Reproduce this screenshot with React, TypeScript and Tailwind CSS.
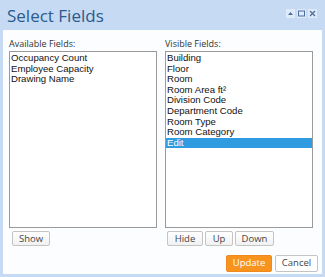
import React from "react";

const available = ["Occupancy Count", "Employee Capacity", "Drawing Name"];
const visible = [
  "Building",
  "Floor",
  "Room",
  "Room Area ft²",
  "Division Code",
  "Department Code",
  "Room Type",
  "Room Category",
  "Edit",
];

function ListBox({ items, selected }: { items: string[]; selected?: string }) {
  return (
    <div className="h-[177px] border border-[#9a9a9a] bg-white pt-[1px] font-['Liberation_Sans',Arial,sans-serif] text-[9.6px] leading-[10.6px] text-[#111]">
      {items.map((it) => (
        <div
          key={it}
          className={`px-[1px] ${it === selected ? "bg-[#2f9be0] text-white" : ""}`}
        >
          {it}
        </div>
      ))}
    </div>
  );
}

function Btn({ label, w }: { label: string; w: string }) {
  return (
    <button
      className={`${w} h-[15px] rounded-[2px] border border-[#c4c4c4] bg-gradient-to-b from-white to-[#f1f1f1] text-[9.5px] leading-[13px] text-[#444]`}
    >
      {label}
    </button>
  );
}

function TitleIcon({ kind }: { kind: "min" | "max" | "close" }) {
  return (
    <div className="flex h-[9px] w-[9px] items-center justify-center bg-[#dfeaf8]">
      <svg width="7" height="7" viewBox="0 0 7 7">
        {kind === "min" && <path d="M1 5h5L3.5 2z" fill="#4d6e9c" />}
        {kind === "max" && (
          <rect x="0.5" y="1" width="6" height="5" fill="none" stroke="#4d6e9c" strokeWidth="1" />
        )}
        {kind === "close" && (
          <path d="M1 1l5 5M6 1L1 6" stroke="#4d6e9c" strokeWidth="1.3" />
        )}
      </svg>
    </div>
  );
}

export default function App() {
  return (
    <div className="flex h-[277px] w-[325px] flex-col bg-[#c6daf3] font-['Open_Sans',sans-serif]">
      <div className="flex h-[30px] items-center justify-between pl-[7px] pr-[8px]">
        <span className="text-[17px] leading-none text-[#2b5b8d]">Select Fields</span>
        <div className="flex gap-[2px] -mt-[3px]">
          <TitleIcon kind="min" />
          <TitleIcon kind="max" />
          <TitleIcon kind="close" />
        </div>
      </div>
      <div className="mx-[3px] mb-[3px] flex flex-1 flex-col bg-[#fbfdff] pl-[6px] pr-[9px] pt-[8px]">
        <div className="flex gap-[8px]">
          <div className="flex w-[149px] flex-col">
            <div className="h-[13px] text-[9px] leading-[12px] text-[#333]">Available Fields:</div>
            <ListBox items={available} />
            <div className="mt-[3px] flex pl-[3px]">
              <Btn label="Show" w="w-[38px]" />
            </div>
          </div>
          <div className="flex w-[149px] flex-col">
            <div className="h-[13px] text-[9px] leading-[12px] text-[#333]">Visible Fields:</div>
            <ListBox items={visible} selected="Edit" />
            <div className="mt-[3px] flex gap-[2px] pl-[2px]">
              <Btn label="Hide" w="w-[36px]" />
              <Btn label="Up" w="w-[28px]" />
              <Btn label="Down" w="w-[39px]" />
            </div>
          </div>
        </div>
        <div className="-mr-[5px] mt-[9px] flex justify-end gap-[3px]">
          <button className="h-[17px] w-[46px] rounded-[2px] border border-[#f08a1c] bg-[#f7931e] text-[9.5px] text-white">
            Update
          </button>
          <button className="h-[17px] w-[43px] rounded-[2px] border border-[#c4c4c4] bg-white text-[9.5px] text-[#444]">
            Cancel
          </button>
        </div>
      </div>
    </div>
  );
}
